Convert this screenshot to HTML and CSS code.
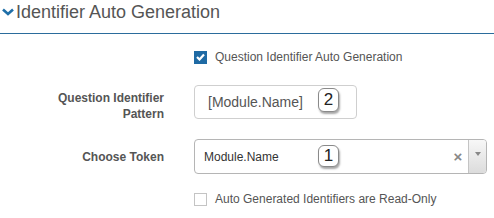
FILE: index.html
```html
<!DOCTYPE html>
<html>
<head>
  <title>Identifier Auto Generation</title>
  <meta charset="UTF-8">
  <link rel="stylesheet" href="styles.css">
</head>
<body>
  <div class="panel">
    <div class="panel-header">
      <svg class="chevron" width="12" height="8" viewBox="0 0 12 8">
        <path d="M1 1.5 L6 6 L11 1.5" fill="none" stroke="#1f6fa8" stroke-width="2.6"/>
      </svg>
      <span class="panel-title">Identifier Auto Generation</span>
    </div>
    <div class="form">
      <div class="form-row row-first">
        <div class="form-label"></div>
        <label class="check">
          <span class="box checked">
            <svg width="9" height="8" viewBox="0 0 9 8"><path d="M1 4 L3.5 6.5 L8 1.5" fill="none" stroke="#fff" stroke-width="2.2"/></svg>
          </span>
          Question Identifier Auto Generation
        </label>
      </div>
      <div class="form-row row-pattern">
        <div class="form-label label-top">Question Identifier<br>Pattern</div>
        <div class="field">
          <div class="text-input">[Module.Name]</div>
          <span class="badge badge-pattern">2</span>
        </div>
      </div>
      <div class="form-row row-token">
        <div class="form-label">Choose Token</div>
        <div class="field">
          <div class="select">
            <span class="select-value">Module.Name</span>
            <span class="select-clear">&times;</span>
            <span class="select-arrow"><span class="triangle"></span></span>
          </div>
          <span class="badge badge-token">1</span>
        </div>
      </div>
      <div class="form-row row-last">
        <div class="form-label"></div>
        <label class="check">
          <span class="box"></span>
          Auto Generated Identifiers are Read-Only
        </label>
      </div>
    </div>
  </div>
</body>
</html>
```

FILE: styles.css
```css
body {
  margin: 0;
  font-family: "Liberation Sans", Arial, sans-serif;
  font-size: 12px;
  color: #555;
  background: #fff;
}

.panel {
  width: 494px;
}

.panel-header {
  display: flex;
  align-items: center;
  height: 33px;
  border-bottom: 1px solid #2b6c9c;
  box-sizing: content-box;
}

.panel-header .chevron {
  margin-left: 2px;
  margin-right: 2px;
  margin-top: -9px;
}

.panel-title {
  font-size: 18px;
  line-height: 24px;
  color: #555;
  align-self: flex-start;
}

.form {
  display: flex;
  flex-direction: column;
  padding-top: 15px;
}

.form-row {
  display: flex;
  align-items: center;
}

.row-pattern {
  align-items: flex-start;
  height: 34px;
  margin-top: 20px;
}

.row-token {
  margin-top: 20px;
}

.row-last {
  margin-top: 17px;
}

.form-label {
  width: 164px;
  margin-right: 30px;
  text-align: right;
  font-weight: bold;
  line-height: 16px;
  color: #555;
}

.label-top {
  padding-top: 5px;
}

.check {
  display: flex;
  align-items: center;
  line-height: 16px;
  color: #555;
}

.box {
  display: flex;
  align-items: center;
  justify-content: center;
  width: 13px;
  height: 13px;
  margin-right: 8px;
  border: 1px solid #c4c4c4;
  box-sizing: border-box;
  background: #fff;
}

.box.checked {
  background: #1f6aa4;
  border-color: #1f6aa4;
}

.field {
  position: relative;
}

.text-input {
  width: 163px;
  height: 34px;
  box-sizing: border-box;
  padding-left: 13px;
  border: 1px solid #cfcfcf;
  border-radius: 4px;
  font-size: 14px;
  line-height: 32px;
  color: #555;
}

.select {
  display: flex;
  align-items: center;
  width: 293px;
  height: 35px;
  box-sizing: border-box;
  border: 1px solid #b5b5b5;
  border-radius: 4px;
  overflow: hidden;
}

.select-value {
  flex: 1;
  padding-left: 9px;
  color: #333;
}

.select-clear {
  width: 14px;
  margin-right: 3px;
  font-size: 15px;
  font-weight: bold;
  color: #888;
  text-align: center;
}

.select-arrow {
  display: flex;
  justify-content: center;
  padding-top: 12px;
  box-sizing: border-box;
  width: 18px;
  height: 100%;
  border-left: 1px solid #c4c4c4;
  background: linear-gradient(#f7f7f7, #dcdcdc);
}

.triangle {
  width: 0;
  height: 0;
  border-left: 3px solid transparent;
  border-right: 3px solid transparent;
  border-top: 4px solid #888;
}

.badge {
  position: absolute;
  left: 124px;
  width: 21px;
  height: 22px;
  box-sizing: border-box;
  border: 1px solid #8a8a8a;
  border-radius: 6px;
  background: #fff;
  box-shadow: 1px 2px 2px rgba(0, 0, 0, 0.35);
  font-size: 17px;
  line-height: 20px;
  text-align: center;
  color: #222;
}

.badge-pattern {
  top: 3px;
  height: 24px;
  line-height: 22px;
}

.badge-token {
  top: 6px;
}
```
